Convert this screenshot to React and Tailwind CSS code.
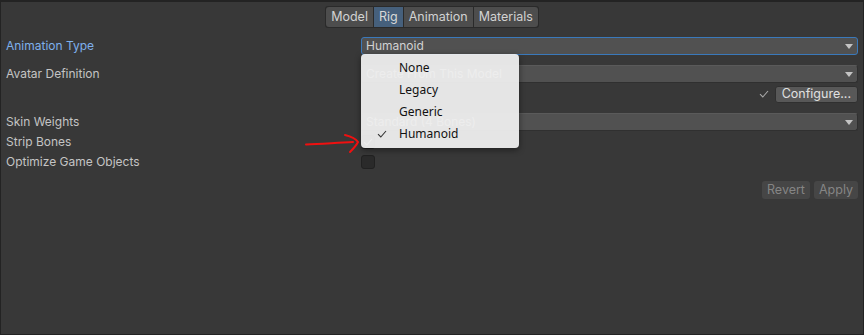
import { useState } from "react";

const LABEL_FONT = { fontFamily: "Inter, 'Noto Sans', sans-serif" };

function Caret() {
  return (
    <svg width="8" height="5" viewBox="0 0 8 5" className="shrink-0">
      <path d="M0 0 L8 0 L4 5 Z" fill="#c4c4c4" />
    </svg>
  );
}

function Dropdown({ value, focused }) {
  return (
    <div
      className={`h-[18px] flex-1 flex items-center justify-between pl-[4px] pr-[4px] rounded-[3px] bg-[#515151] text-[12px] text-[#d2d2d2] ${
        focused ? "border border-[#3a79bb]" : "border border-[#303030] border-t-[#5a5a5a]"
      }`}
    >
      <span>{value}</span>
      <Caret />
    </div>
  );
}

function Check({ color = "#c4c4c4", size = 10, width = 1.1 }) {
  return (
    <svg width={size} height={size} viewBox="0 0 10 10">
      <path d="M1 5.2 L3.8 8 L9 2" fill="none" stroke={color} strokeWidth={width} />
    </svg>
  );
}

function Checkbox({ checked }) {
  return (
    <div className="w-[14px] h-[14px] rounded-[3px] bg-[#2a2a2a] border border-[#212121] flex items-center justify-center">
      {checked && <Check color="#d0d0d0" />}
    </div>
  );
}

function Row({ label, active, children, className = "" }) {
  return (
    <div className={`h-[20px] flex items-center ${className}`}>
      <div className={`w-[355px] shrink-0 text-[12px] ${active ? "text-[#7eb0ec]" : "text-[#c4c4c4]"}`}>
        {label}
      </div>
      <div className="flex-1 flex items-center">{children}</div>
    </div>
  );
}

const tabs = ["Model", "Rig", "Animation", "Materials"];
const options = ["None", "Legacy", "Generic", "Humanoid"];

export default function App() {
  const [tab] = useState("Rig");

  return (
    <div
      className="relative w-[864px] h-[335px] bg-[#383838] border border-[#232323] border-t-2 overflow-hidden"
      style={LABEL_FONT}
    >
      <div className="flex justify-center pt-[4px]">
        <div className="flex gap-[1px] bg-[#2a2a2a] p-[1px] rounded-[3px]">
          {tabs.map((t) => (
            <div
              key={t}
              className={`h-[20px] px-[5px] flex items-center text-[12.5px] ${
                t === tab ? "bg-[#46607c] text-[#d8d8d8]" : "bg-[#4d4d4d] text-[#d2d2d2]"
              } ${t === "Model" ? "rounded-l-[3px]" : ""} ${t === "Materials" ? "rounded-r-[3px]" : ""}`}
            >
              {t}
            </div>
          ))}
        </div>
      </div>

      <div className="pl-[5px] pr-[5px] pt-[8px]">
        <Row label="Animation Type" active>
          <Dropdown value="Humanoid" focused />
        </Row>
        <Row label="Avatar Definition" className="mt-[8px]">
          <Dropdown value="Create From This Model" />
        </Row>
        <Row label="">
          <div className="flex-1 flex items-center justify-end gap-[6px]">
            <Check color="#a8a8a8" />
            <div className="h-[17px] px-[6px] flex items-center rounded-[3px] bg-[#585858] border border-[#303030] text-[12.5px] text-[#e0e0e0]">
              Configure...
            </div>
          </div>
        </Row>
        <Row label="Skin Weights" className="mt-[8px]">
          <Dropdown value="Standard (4 Bones)" />
        </Row>
        <Row label="Strip Bones">
          <Checkbox checked />
        </Row>
        <Row label="Optimize Game Objects">
          <Checkbox />
        </Row>
        <div className="flex justify-end gap-[4px] mt-[9px]">
          <div className="h-[18px] px-[5px] flex items-center rounded-[3px] bg-[#464646] text-[12.5px] text-[#858585]">
            Revert
          </div>
          <div className="h-[18px] px-[5px] flex items-center rounded-[3px] bg-[#464646] text-[12.5px] text-[#858585]">
            Apply
          </div>
        </div>
      </div>

      {/* dropdown menu */}
      <div
        className="absolute left-[360px] top-[52px] w-[158px] h-[94px] rounded-[4px] bg-[#eeeeee]/95 shadow-[0_2px_6px_rgba(0,0,0,0.45)] pt-[3px]"
        style={{ fontFamily: "'Noto Sans', 'Open Sans', sans-serif" }}
      >
        {options.map((o) => (
          <div key={o} className="h-[22px] flex items-center text-[12px] text-[#111111]">
            <div className="w-[38px] flex justify-center pl-[4px]">
              {o === "Humanoid" && <Check color="#333333" />}
            </div>
            <span>{o}</span>
          </div>
        ))}
      </div>

      {/* red annotation arrow */}
      <svg className="absolute left-[300px] top-[128px]" width="64" height="28" viewBox="0 0 64 28">
        <path
          d="M5 14.5 C20 13.5 35 13 52 12"
          fill="none"
          stroke="#f01010"
          strokeWidth="2"
          strokeLinecap="round"
        />
        <path
          d="M44 5 C50 6.5 55 9 57 12 C55 16 52 19 49 22"
          fill="none"
          stroke="#f01010"
          strokeWidth="2"
          strokeLinecap="round"
        />
      </svg>
    </div>
  );
}
